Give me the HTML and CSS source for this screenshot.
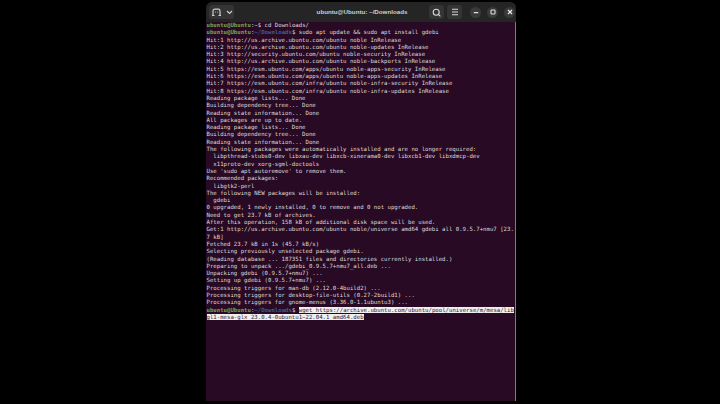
FILE: index.html
```html
<!DOCTYPE html>
<html lang="en">
<head>
<meta charset="utf-8">
<title>ubuntu@Ubuntu: ~/Downloads</title>
<link rel="stylesheet" href="styles.css">
</head>
<body>
<main class="window">
<header class="titlebar">
<div class="bar-left">
<div class="tab-group">
<button class="tb tb-new"><svg width="11" height="9" viewBox="0 0 11 9"><path d="M2 7.5V3a1.8 1.8 0 0 1 1.8-1.8h3.4A1.8 1.8 0 0 1 9 3v4.5M1 7.5h2.5M7.5 7.5H10M4.2 4.2h.6M6.2 4.2h.6" fill="none" stroke="#cfcfcf" stroke-width="1.2"/></svg></button>
<button class="tb tb-arrow"><svg width="7" height="5" viewBox="0 0 7 5"><path d="M1 1l2.5 2.5L6 1" fill="none" stroke="#cfcfcf" stroke-width="1.1"/></svg></button>
</div>
</div>
<h1 class="title">ubuntu@Ubuntu: ~/Downloads</h1>
<div class="bar-right">
<div class="actions">
<button class="tb tb-square"><svg width="9" height="9" viewBox="0 0 9 9"><circle cx="4.2" cy="4.2" r="3" fill="none" stroke="#d8d8d8" stroke-width="1.1"/><path d="M6.3 6.3L8.4 8.4" stroke="#d8d8d8" stroke-width="1.1"/></svg></button>
<button class="tb tb-square"><svg width="8" height="8" viewBox="0 0 8 8"><path d="M1 1.2h6M1 4h6M1 6.8h6" stroke="#d8d8d8" stroke-width="1.1"/></svg></button>
</div>
<div class="controls">
<button class="round"><svg width="6" height="6" viewBox="0 0 6 6"><path d="M.8 3.6h4.4" stroke="#e0e0e0" stroke-width="1.1"/></svg></button>
<button class="round"><svg width="6" height="6" viewBox="0 0 6 6"><rect x="1" y="1" width="4" height="4" rx=".8" fill="none" stroke="#e0e0e0" stroke-width="1.1"/></svg></button>
<button class="round"><svg width="6" height="6" viewBox="0 0 6 6"><path d="M1 1l4 4M5 1L1 5" stroke="#eeeeee" stroke-width="1.2"/></svg></button>
</div>
</div>
</header>
<pre class="term"><span class="pg">ubuntu@Ubuntu</span>:~$ cd Downloads/
<span class="pg">ubuntu@Ubuntu</span>:<span class="pb">~/Downloads</span>$ sudo apt update &amp;&amp; sudo apt install gdebi
Hit:1 http://us.archive.ubuntu.com/ubuntu noble InRelease
Hit:2 http://us.archive.ubuntu.com/ubuntu noble-updates InRelease
Hit:3 http://security.ubuntu.com/ubuntu noble-security InRelease
Hit:4 http://us.archive.ubuntu.com/ubuntu noble-backports InRelease
Hit:5 https://esm.ubuntu.com/apps/ubuntu noble-apps-security InRelease
Hit:6 https://esm.ubuntu.com/apps/ubuntu noble-apps-updates InRelease
Hit:7 https://esm.ubuntu.com/infra/ubuntu noble-infra-security InRelease
Hit:8 https://esm.ubuntu.com/infra/ubuntu noble-infra-updates InRelease
Reading package lists... Done
Building dependency tree... Done
Reading state information... Done
All packages are up to date.
Reading package lists... Done
Building dependency tree... Done
Reading state information... Done
The following packages were automatically installed and are no longer required:
  libpthread-stubs0-dev libxau-dev libxcb-xinerama0-dev libxcb1-dev libxdmcp-dev
  x11proto-dev xorg-sgml-doctools
Use 'sudo apt autoremove' to remove them.
Recommended packages:
  libgtk2-perl
The following NEW packages will be installed:
  gdebi
0 upgraded, 1 newly installed, 0 to remove and 0 not upgraded.
Need to get 23.7 kB of archives.
After this operation, 158 kB of additional disk space will be used.
Get:1 http://us.archive.ubuntu.com/ubuntu noble/universe amd64 gdebi all 0.9.5.7+nmu7 [23.
7 kB]
Fetched 23.7 kB in 1s (45.7 kB/s)
Selecting previously unselected package gdebi.
(Reading database ... 187351 files and directories currently installed.)
Preparing to unpack .../gdebi_0.9.5.7+nmu7_all.deb ...
Unpacking gdebi (0.9.5.7+nmu7) ...
Setting up gdebi (0.9.5.7+nmu7) ...
Processing triggers for man-db (2.12.0-4build2) ...
Processing triggers for desktop-file-utils (0.27-2build1) ...
Processing triggers for gnome-menus (3.36.0-1.1ubuntu3) ...
<span class="pg">ubuntu@Ubuntu</span>:<span class="pb">~/Downloads</span>$ <span class="sel">wget https://archive.ubuntu.com/ubuntu/pool/universe/m/mesa/lib</span>
<span class="sel">gl1-mesa-glx_23.0.4-0ubuntu1~22.04.1_amd64.deb</span></pre>
</main>
</body>
</html>
```
FILE: styles.css
```css
html, body { margin: 0; height: 100%; background: #000; overflow: hidden; }
body { display: flex; padding: 2px 204px 3px 206px; box-sizing: border-box; }
.window { flex: 1; display: flex; flex-direction: column; background: #290a24; border-radius: 6px 6px 0 0; overflow: hidden; min-width: 0; }
.titlebar { flex: none; height: 20px; background: #252525; display: grid; grid-template-columns: 1fr auto 1fr; align-items: center; padding: 0 1px 0 3px; }
.bar-left { display: flex; }
.bar-right { display: flex; justify-content: flex-end; align-items: center; gap: 8px; }
.tab-group { display: flex; background: #343434; border-radius: 3px; }
button { padding: 0; border: 0; background: none; display: flex; align-items: center; justify-content: center; }
.tb { height: 14px; }
.tb-new { width: 15px; }
.tb-arrow { width: 10px; }
.title { margin: 0; font: 700 6.2px/20px "Liberation Sans", sans-serif; color: #d0d0d0; white-space: nowrap; }
.actions { display: flex; gap: 3px; }
.tb-square { width: 15px; background: #343434; border-radius: 3px; }
.controls { display: flex; gap: 6px; }
.round { width: 11px; height: 11px; border-radius: 50%; background: #3a3a3a; }
.term { margin: 0; padding: 0 0 0 .5px; flex: 1; overflow: hidden; border-right: 1px solid #7d7a7c; font: 5.68px/7.29px "DejaVu Sans Mono", monospace; color: #dedbda; }
.pg { color: #74a850; font-weight: 700; }
.pb { color: #3f5c92; font-weight: 700; }
.sel { background: #efefef; color: #35172f; }
```
